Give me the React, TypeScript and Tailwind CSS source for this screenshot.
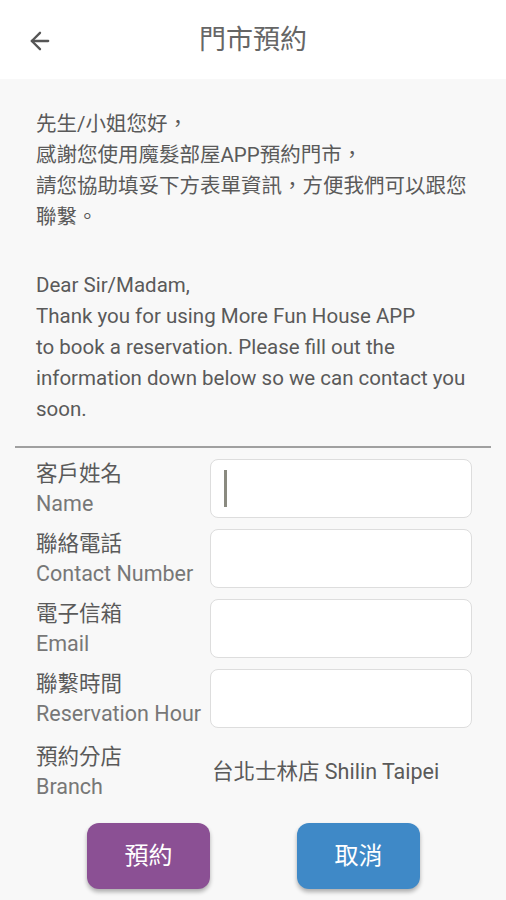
import { ArrowLeft } from "lucide-react";

const font = { fontFamily: 'Roboto, "Noto Sans CJK TC", sans-serif' };

const rows = [
  { zh: "客戶姓名", en: "Name", caret: true },
  { zh: "聯絡電話", en: "Contact Number" },
  { zh: "電子信箱", en: "Email" },
  { zh: "聯繫時間", en: "Reservation Hour" },
];

export default function App() {
  return (
    <div className="w-[506px] h-[900px] bg-[#f8f8f8] text-[#5a5a5a] overflow-hidden" style={font}>
      <div className="h-[79px] bg-white relative flex items-center justify-center">
        <ArrowLeft className="absolute left-[26px] top-[27px] text-[#555]" size={28} strokeWidth={2} />
        <h1 className="text-[27px] text-[#666] mt-[2px]">門市預約</h1>
      </div>

      <div className="px-[36px] pt-[30px] text-[20.5px] leading-[31px]">
        <p>先生/小姐您好，</p>
        <p>感謝您使用魔髮部屋APP預約門市，</p>
        <p>請您協助填妥下方表單資訊，方便我們可以跟您聯繫。</p>
        <p className="mt-[37px]">Dear Sir/Madam,</p>
        <p>Thank you for using More Fun House APP</p>
        <p>to book a reservation. Please fill out the information down below so we can contact you soon.</p>
      </div>

      <div className="mx-[15px] mt-[21px] h-[2px] bg-[#a0a0a0]" />

      <div className="pl-[36px] pr-[34px] pt-[11px] flex flex-col gap-[11px]">
        {rows.map(r => (
          <div key={r.zh} className="flex items-center h-[59px]">
            <div className="w-[174px] text-[21.5px] leading-[30px] shrink-0 whitespace-nowrap">
              <div>{r.zh}</div>
              <div className="text-[#777]">{r.en}</div>
            </div>
            <div className="flex-1 h-[59px] bg-white border border-[#dddddd] rounded-[8px] flex items-center px-[13px]">
              {r.caret && <div className="w-[3px] h-[37px] bg-[#8a8a80]" />}
            </div>
          </div>
        ))}
        <div className="flex items-center mt-[3px]">
          <div className="w-[176px] text-[21.5px] leading-[30px] shrink-0">
            <div>預約分店</div>
            <div className="text-[#777]">Branch</div>
          </div>
          <div className="text-[21.5px]">台北士林店 Shilin Taipei</div>
        </div>
      </div>

      <div className="flex pl-[87px] gap-[87px] mt-[21px]">
        <button className="w-[123px] h-[66px] rounded-[12px] bg-[#8b5094] text-white text-[24px] shadow-[0_3px_4px_rgba(0,0,0,0.3)]">預約</button>
        <button className="w-[123px] h-[66px] rounded-[12px] bg-[#3f89c7] text-white text-[24px] shadow-[0_3px_4px_rgba(0,0,0,0.3)]">取消</button>
      </div>
    </div>
  );
}
